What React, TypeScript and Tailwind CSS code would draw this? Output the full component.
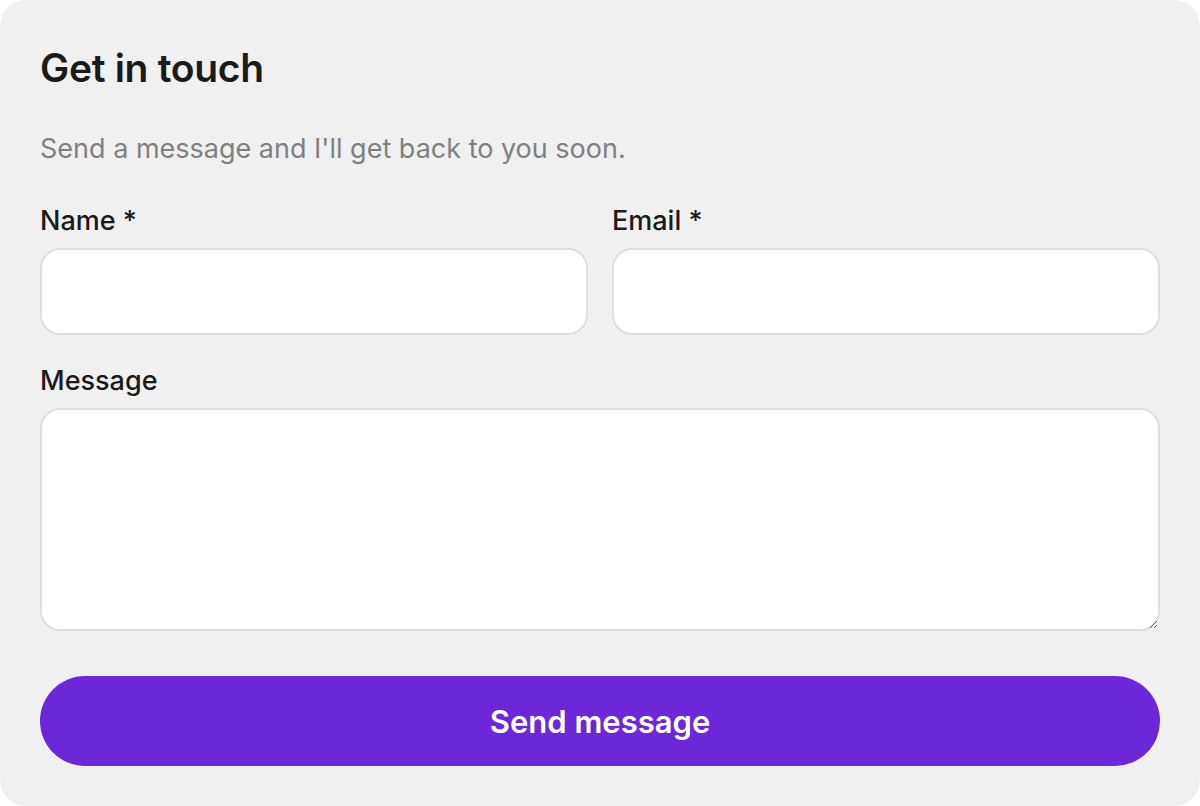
import React from "react";

export default function App() {
  return (
    <div className="w-[1200px] h-[806px] bg-white" style={{ fontFamily: "Inter, 'Noto Sans', sans-serif" }}>
      <div className="w-full h-full rounded-[26px] bg-[#f0f0f0] px-10 pt-[46px] pb-10 flex flex-col">
        <h1 className="text-[39px] leading-[44px] font-semibold text-[#1a1a1a] tracking-[-0.3px]">Get in touch</h1>
        <p className="mt-[41px] text-[27px] leading-[36px] text-[#808080]">Send a message and I'll get back to you soon.</p>
        <div className="mt-[36px] grid grid-cols-2 gap-x-6">
          <label className="flex flex-col">
            <span className="text-[27px] leading-[36px] font-medium text-[#1a1a1a]">Name *</span>
            <input className="mt-[9px] h-[87px] rounded-[20px] border-2 border-[#dedede] bg-white px-5 text-[26px] outline-none" />
          </label>
          <label className="flex flex-col">
            <span className="text-[27px] leading-[36px] font-medium text-[#1a1a1a]">Email *</span>
            <input className="mt-[9px] h-[87px] rounded-[20px] border-2 border-[#dedede] bg-white px-5 text-[26px] outline-none" />
          </label>
        </div>
        <label className="mt-[28px] flex flex-col">
          <span className="text-[27px] leading-[36px] font-medium text-[#1a1a1a]">Message</span>
          <textarea className="mt-[9px] h-[223px] rounded-[20px] border-2 border-[#dedede] bg-white px-5 py-4 text-[26px] outline-none" />
        </label>
        <button className="mt-[45px] h-[90px] w-full rounded-full bg-[#6c27d9] pt-[2px] text-white text-[31px] font-semibold">
          Send message
        </button>
      </div>
    </div>
  );
}
